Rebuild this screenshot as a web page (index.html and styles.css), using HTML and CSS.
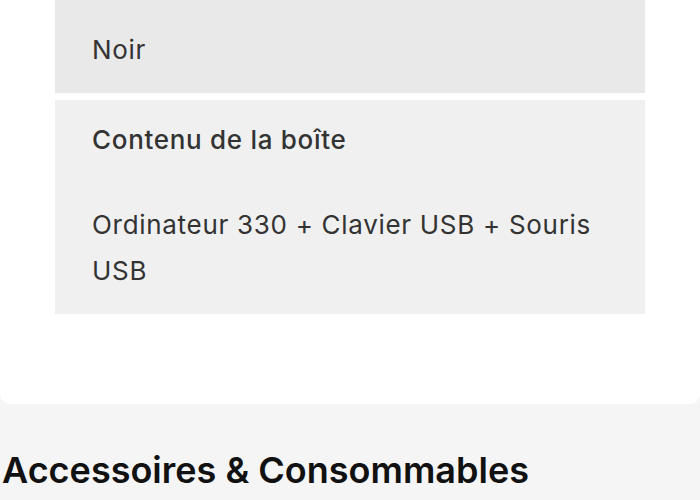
FILE: index.html
```html
<!DOCTYPE html>
<html lang="fr">
<head>
<meta charset="utf-8">
<link rel="stylesheet" href="styles.css">
</head>
<body>
<section class="card">
  <div class="spec spec-dark">
    <p class="value">Noir</p>
  </div>
  <div class="spec spec-light">
    <p class="label">Contenu de la boîte</p>
    <p class="value">Ordinateur 330 + Clavier USB + Souris USB</p>
  </div>
</section>
<h2 class="section-title">Accessoires &amp; Consommables</h2>
</body>
</html>
```

FILE: styles.css
```css
html, body {
  margin: 0;
  padding: 0;
}
body {
  background: #f5f5f5;
  font-family: Inter, "Noto Sans", sans-serif;
  color: #333;
}
.card {
  background: #fff;
  width: 700px;
  border-radius: 0 0 10px 10px;
  padding: 0 55px 90px;
  box-sizing: border-box;
  display: flex;
  flex-direction: column;
  gap: 7px;
}
.spec {
  padding: 27px 37px 20px;
}
.spec-dark {
  background: #e9e9e9;
}
.spec-light {
  background: #f0f0f0;
  padding-top: 17px;
}
.spec p {
  margin: 0;
  font-size: 26px;
  line-height: 46px;
  letter-spacing: 0.7px;
}
.label {
  font-weight: 500;
  margin-bottom: 39px !important;
}
.value {
  font-weight: 400;
}
.section-title {
  margin: 46px 0 0 2px;
  font-size: 36px;
  line-height: 41px;
  font-weight: 600;
  color: #111;
}
```
